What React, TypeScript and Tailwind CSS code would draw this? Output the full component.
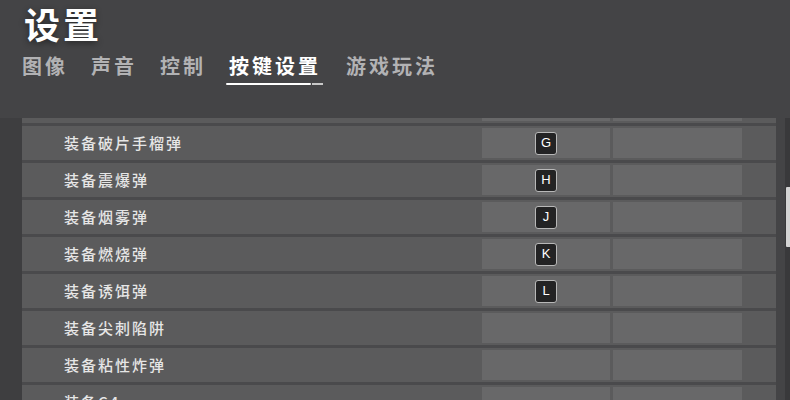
const tabs = [
  { label: '图像', active: false },
  { label: '声音', active: false },
  { label: '控制', active: false },
  { label: '按键设置', active: true },
  { label: '游戏玩法', active: false },
];

// first entry is the row scrolled up under the tabs, only its bottom edge shows
const bindings: { id: string; label: string; key?: string }[] = [
  { id: 'hidden', label: '' },
  { id: 'frag', label: '装备破片手榴弹', key: 'G' },
  { id: 'flash', label: '装备震爆弹', key: 'H' },
  { id: 'smoke', label: '装备烟雾弹', key: 'J' },
  { id: 'molotov', label: '装备燃烧弹', key: 'K' },
  { id: 'decoy', label: '装备诱饵弹', key: 'L' },
  { id: 'spike', label: '装备尖刺陷阱' },
  { id: 'sticky', label: '装备粘性炸弹' },
  { id: 'c4', label: '装备C4' },
];

export default function App() {
  return (
    <div
      className="w-[790px] h-[400px] overflow-hidden bg-[#444446] text-white"
      style={{ fontFamily: '"Noto Sans CJK SC", "Noto Sans", sans-serif' }}
    >
      {/* Header */}
      <div className="pl-[24px]">
        <h1 className="text-[36px] leading-[46px] font-bold tracking-[3px] text-white [text-shadow:0_2px_6px_rgba(0,0,0,0.45)]">
          设置
        </h1>
      </div>

      {/* Tabs */}
      <div className="flex items-start gap-[23px] pl-[22px] mt-[6px] h-[66px]">
        {tabs.map((tab) =>
          tab.active ? (
            <div key={tab.label} className="flex flex-col">
              <span className="text-[20px] leading-[28px] font-bold tracking-[3px] text-white">
                {tab.label}
              </span>
              <div className="flex items-center mt-[3px] -ml-[3px]">
                <div className="h-[2px] w-[85px] bg-white rounded-full" />
                <div className="h-[2px] w-[11px] ml-[1px] bg-[#c8c8c8]" />
              </div>
            </div>
          ) : (
            <span key={tab.label} className="text-[20px] leading-[28px] font-semibold tracking-[3px] text-[#b2b2b4]">
              {tab.label}
            </span>
          )
        )}
      </div>

      {/* Binding list */}
      <div className="flex h-[282px]">
        <div className="w-[22px] bg-[#3e3e40]" />
        <div className="w-[754px] overflow-hidden bg-[#4a4a4c]">
          {bindings.map((row, i) => (
            <div
              key={row.id}
              className={`flex items-center h-[34px] bg-[#5b5b5c] ${i === 0 ? '-mt-[29px]' : 'mt-[3px]'}`}
            >
              <div className="w-[460px] pl-[42px] text-[15px] font-medium tracking-[2px] text-[#e6e6e6]">
                {row.label}
              </div>
              <div className="w-[128px] h-[30px] bg-[#686869] flex items-center justify-center">
                {row.key && (
                  <div
                    className="w-[22px] h-[23px] rounded-[3px] border border-[#b8b8b8] bg-[#232324] flex items-center justify-center text-[13px] text-white"
                    style={{ fontFamily: '"Liberation Sans", Arial, sans-serif' }}
                  >
                    {row.key}
                  </div>
                )}
              </div>
              <div className="w-[129px] h-[30px] ml-[3px] bg-[#686869]" />
            </div>
          ))}
        </div>
        <div className="w-[9px]" />
        <div className="w-[5px] bg-[#39393b] pt-[69px]">
          <div className="h-[60px] ml-[1px] bg-[#d4d4d4] rounded-l-[1px]" />
        </div>
      </div>
    </div>
  );
}
